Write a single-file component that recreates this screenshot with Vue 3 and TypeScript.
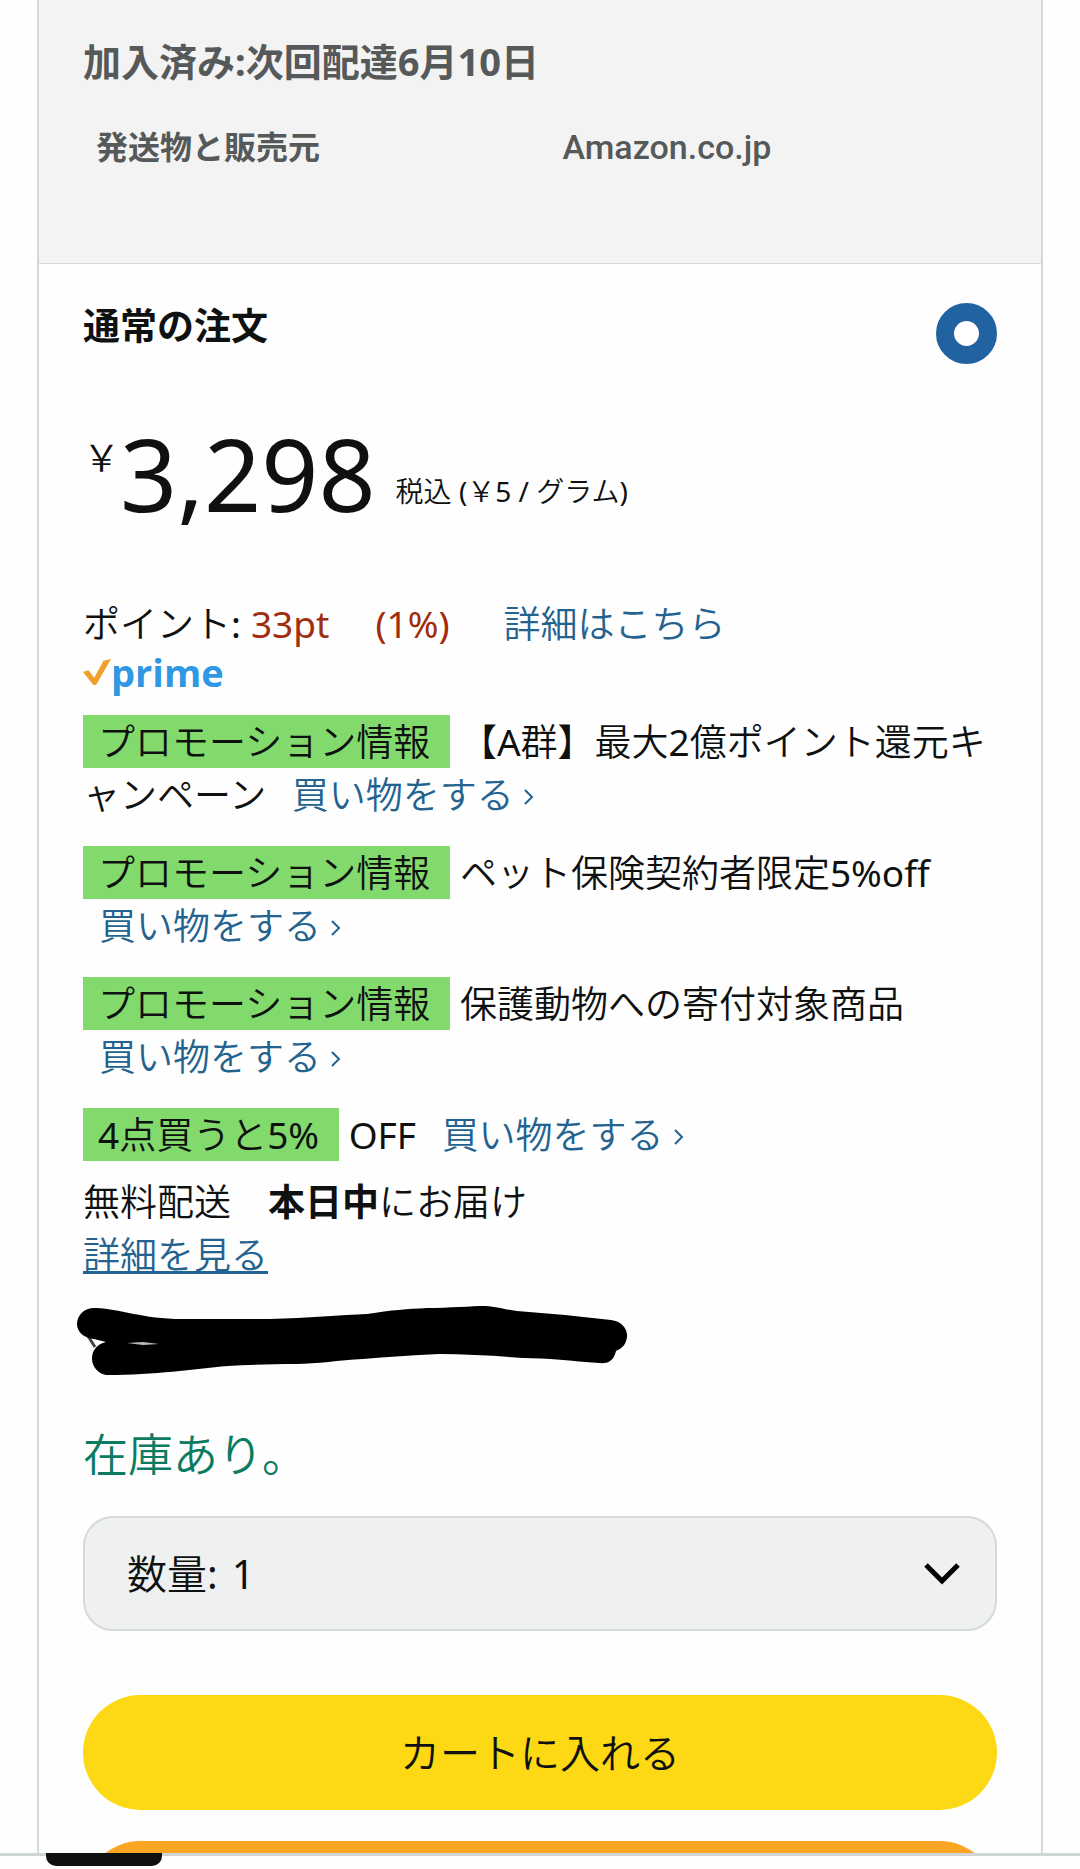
<script setup lang="ts">
import { ref } from 'vue'

interface Promotion {
  badge: string
  text: string
  linkBelow: boolean
}

const promotions: Promotion[] = [
  { badge: 'プロモーション情報', text: '【A群】最大2億ポイント還元キャンペーン', linkBelow: false },
  { badge: 'プロモーション情報', text: 'ペット保険契約者限定5%off', linkBelow: true },
  { badge: 'プロモーション情報', text: '保護動物への寄付対象商品', linkBelow: true },
  { badge: '4点買うと5%', text: 'OFF', linkBelow: false },
]

const purchaseType = ref('once')
const quantity = ref(1)
const quantities = [1, 2, 3, 4, 5]
</script>

<template>
  <div class="page" lang="ja">
    <main class="viewport">
      <div class="card">
        <section class="subscription">
          <h2 class="title">加入済み:次回配達6月10日</h2>
          <div class="seller">
            <span>発送物と販売元</span>
            <span class="seller-name">Amazon.co.jp</span>
          </div>
        </section>

        <section class="order">
          <div class="order-head">
            <label class="order-label" for="order-once">通常の注文</label>
            <input id="order-once" v-model="purchaseType" class="radio" type="radio" name="purchase" value="once" />
          </div>

          <div class="price">
            <span class="yen">￥</span>
            <span class="amount">3,298</span>
            <span class="unit">税込 (￥5 / グラム)</span>
          </div>

          <div class="points">
            <span>ポイント:</span>
            <span class="points-value">33pt</span>
            <span class="points-value rate">(1%)</span>
            <a class="link points-link" href="#points">詳細はこちら</a>
          </div>

          <div class="prime">
            <svg class="prime-check" viewBox="0 0 30 29" aria-hidden="true">
              <path d="M0 14 L6 12 L12 20 L22 2 L30 0 L14 28 L11 28 Z" fill="#f0a02a" />
            </svg>
            <span>prime</span>
          </div>

          <ul class="promotions">
            <li v-for="(promo, i) in promotions" :key="i">
              <span class="badge">{{ promo.badge }}</span>
              {{ promo.text }}
              <br v-if="promo.linkBelow" />
              <a class="link shop" href="#shop">買い物をする<svg class="arrow" viewBox="0 0 10 16" aria-hidden="true"><path d="M1 1 L8 8 L1 15" /></svg></a>
            </li>
          </ul>

          <p class="delivery">
            無料配送　<strong>本日中</strong>にお届け<br />
            <a class="link underlined" href="#delivery">詳細を見る</a>
          </p>

          <svg class="scribble" viewBox="0 0 552 70" aria-hidden="true">
            <path d="M11 30 L18 41" stroke="#444" stroke-width="3" />
            <path
              d="M0 18 C0 8 9 1 19 2 C45 3 65 13 105 13 L193 13 C230 12 265 9 290 8 C315 4 330 3 350 2 C372 2 395 0 408 0 C422 1 430 4 440 5 L488 9 L534 14 C545 15 551 24 550 31 C549 38 546 42 539 45 C537 54 532 58 522 57 C495 55 470 52 446 52 C420 50 390 48 362 48 C335 49 310 51 286 53 C262 54 240 58 219 58 C195 58 172 59 151 60 C115 63 80 69 29 69 C21 68 15 60 15 53 C15 44 20 38 29 36 L17 33 C7 32 0 26 0 18 Z"
            />
            <path d="M50 37 L66 36 L82 38 L66 39 Z" fill="#bbb" />
          </svg>

          <p class="stock">在庫あり。</p>

          <div class="quantity">
            <label for="quantity">数量:</label>
            <select id="quantity" v-model="quantity">
              <option v-for="n in quantities" :key="n" :value="n">{{ n }}</option>
            </select>
            <svg class="chevron" viewBox="0 0 36 24" aria-hidden="true"><path d="M2 3 L18 19 L34 3" /></svg>
          </div>

          <button class="action cart" type="button">カートに入れる</button>
          <button class="action buy" type="button" aria-label="今すぐ買う"></button>
        </section>
      </div>
    </main>
    <footer class="tabbar"><span class="tab-indicator"></span></footer>
  </div>
</template>

<style>
body {
  margin: 0;
  background: #fefefe;
}
</style>

<style scoped>
.page {
  display: flex;
  flex-direction: column;
  height: 100vh;
  overflow: hidden;
  color: #0f1111;
  font-family: "Noto Sans", "Noto Sans CJK JP DemiLight", "Noto Sans CJK JP", sans-serif;
  font-size: 37px;
  line-height: 53px;
  line-break: loose;
}

.title,
.order-label,
.seller,
.delivery strong {
  font-family: "Noto Sans", "Noto Sans CJK JP", sans-serif;
  font-weight: 700;
}

.viewport {
  flex: 1;
  min-height: 0;
  overflow: hidden;
  padding: 0 37px;
}

.card {
  border: solid #d5d9d9;
  border-width: 0 2px;
}

.title {
  margin: 0;
  font-size: 38px;
}

.subscription {
  padding: 35px 44px 93px;
  border-bottom: 1px solid #d5d9d9;
  background: #f3f3f3;
  color: #565959;
}

.seller {
  display: grid;
  grid-template-columns: 1fr 1fr;
  margin-top: 36px;
  padding-left: 13px;
  font-size: 32px;
  line-height: 46px;
}

.seller-name {
  padding-left: 16px;
  font-family: Roboto, sans-serif;
  font-size: 34px;
  font-weight: 500;
}

.order {
  padding: 35px 44px 0;
}

.order-head {
  display: flex;
  justify-content: space-between;
  align-items: flex-start;
}

.radio {
  appearance: none;
  box-sizing: border-box;
  width: 61px;
  height: 61px;
  margin: 4px 0 0;
  border: 18px solid #2162a1;
  border-radius: 50%;
  background: #fff;
}

.price {
  display: flex;
  align-items: flex-end;
  margin-top: 60px;
}

.yen {
  align-self: flex-start;
  margin-top: 7px;
}

.amount {
  font-size: 100px;
  line-height: 98px;
}

.unit {
  margin: 0 0 11px 20px;
  font-size: 28px;
  line-height: 40px;
}

.points {
  display: flex;
  margin-top: 75px;
}

.points-value {
  margin-left: 10px;
  color: #a02d0c;
}

.points .rate {
  margin-left: 46px;
}

.points-link {
  margin-left: 54px;
}

.link {
  color: #24638f;
  text-decoration: none;
}

.prime {
  display: flex;
  align-items: center;
  height: 65px;
  box-sizing: border-box;
  padding-bottom: 20px;
  color: #2f98e4;
  font-family: "Open Sans", sans-serif;
  font-size: 38px;
  font-weight: 700;
}

.prime-check {
  width: 28px;
  height: 29px;
}

.promotions {
  display: flex;
  flex-direction: column;
  gap: 25px;
  margin: 0;
  padding: 0;
  list-style: none;
}

.badge {
  display: inline-block;
  padding: 0 20px 0 15px;
  background: #82da6d;
}

.shop {
  margin-left: 16px;
}

.arrow {
  width: 10px;
  height: 16px;
  margin-left: 10px;
  fill: none;
  stroke: currentColor;
  stroke-width: 2;
  vertical-align: 4px;
}

.delivery {
  margin: 14px 0 0;
}

.underlined {
  text-decoration: underline;
  text-decoration-thickness: 3px;
}

.scribble {
  display: block;
  width: 552px;
  height: 70px;
  margin: 25px 0 0 -6px;
}

.stock {
  margin: 49px 0 31px;
  color: #0b7b61;
  font-size: 45px;
  line-height: 60px;
}

.quantity {
  display: flex;
  position: relative;
  align-items: center;
  box-sizing: border-box;
  height: 115px;
  padding-left: 42px;
  border: 2px solid #d5d9d9;
  border-radius: 30px;
  background: #eff1f1;
  font-size: 40px;
}

.quantity select {
  appearance: none;
  flex: 1;
  align-self: stretch;
  padding: 0 0 0 14px;
  border: 0;
  border-radius: 30px;
  background: transparent;
  color: inherit;
  font: inherit;
}

.chevron {
  position: absolute;
  right: 35px;
  width: 36px;
  height: 24px;
  fill: none;
  stroke: #000;
  stroke-width: 5;
  pointer-events: none;
}

.action {
  display: block;
  width: 100%;
  height: 115px;
  border: 0;
  border-radius: 58px;
  color: inherit;
  font: inherit;
  font-size: 40px;
}

.cart {
  margin-top: 64px;
  background: #fdd814;
}

.buy {
  margin-top: 31px;
  background: #fba524;
}

.tabbar {
  height: 13px;
  border-top: 3px solid #cfd4d6;
  padding-left: 46px;
}

.tab-indicator {
  display: block;
  width: 116px;
  height: 13px;
  margin-top: -3px;
  border-radius: 0 0 10px 10px;
  background: #0f1111;
}
</style>
